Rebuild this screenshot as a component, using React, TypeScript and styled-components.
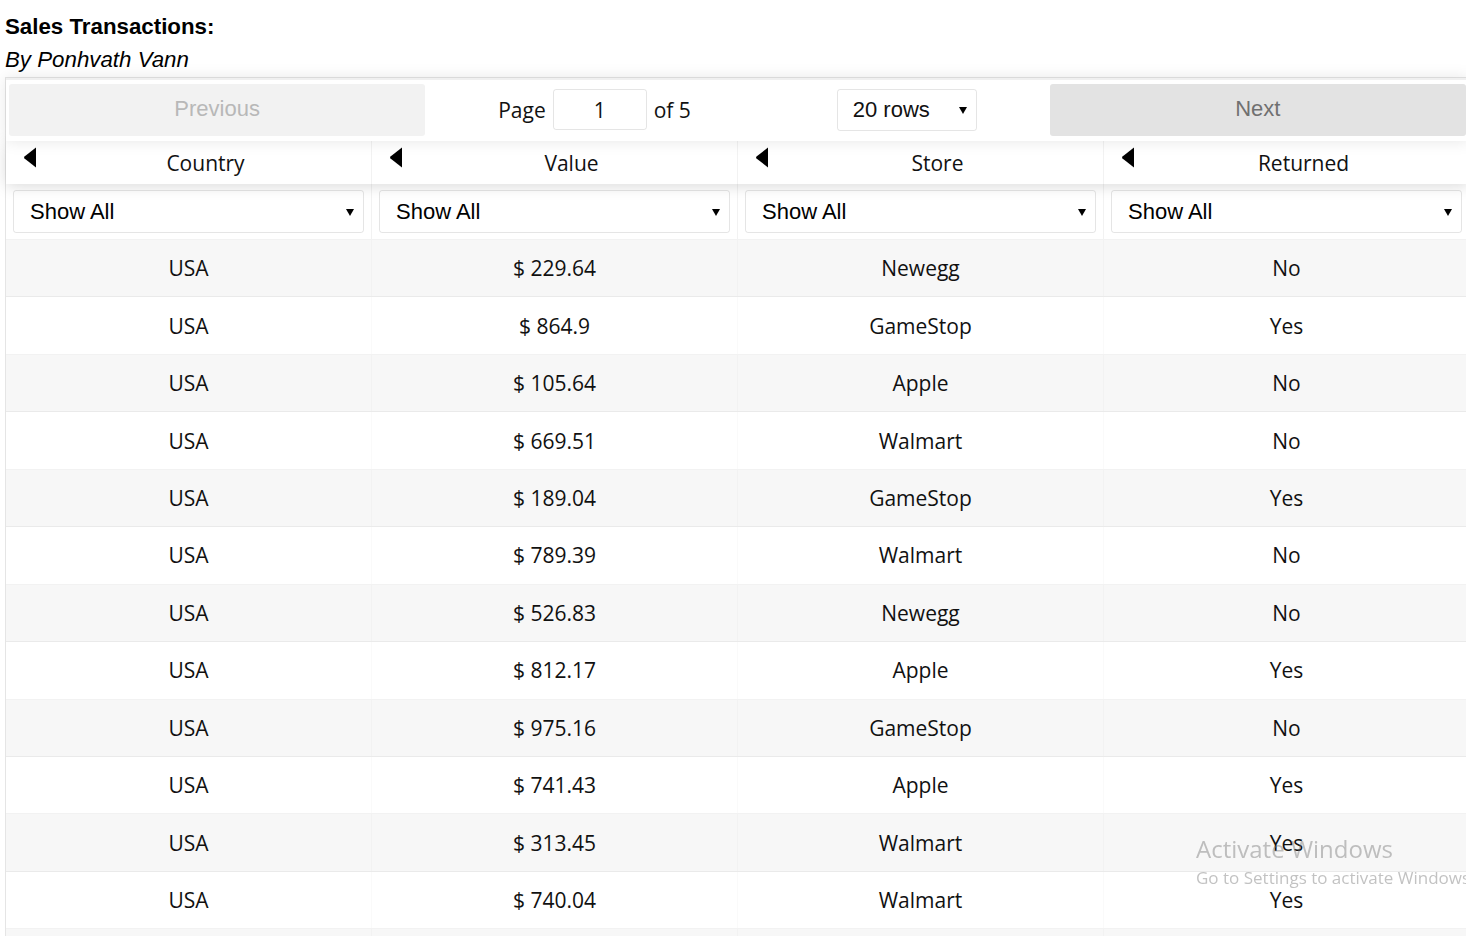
import React from 'react';
import styled, { createGlobalStyle } from 'styled-components';

const rows: [string, string, string, string][] = [
  ['USA', '$ 229.64', 'Newegg', 'No'],
  ['USA', '$ 864.9', 'GameStop', 'Yes'],
  ['USA', '$ 105.64', 'Apple', 'No'],
  ['USA', '$ 669.51', 'Walmart', 'No'],
  ['USA', '$ 189.04', 'GameStop', 'Yes'],
  ['USA', '$ 789.39', 'Walmart', 'No'],
  ['USA', '$ 526.83', 'Newegg', 'No'],
  ['USA', '$ 812.17', 'Apple', 'Yes'],
  ['USA', '$ 975.16', 'GameStop', 'No'],
  ['USA', '$ 741.43', 'Apple', 'Yes'],
  ['USA', '$ 313.45', 'Walmart', 'Yes'],
  ['USA', '$ 740.04', 'Walmart', 'Yes'],
  ['USA', '$ 402.18', 'Newegg', 'No'],
  ['USA', '$ 158.72', 'Apple', 'Yes'],
  ['USA', '$ 633.09', 'GameStop', 'No'],
  ['USA', '$ 287.5', 'Walmart', 'No'],
  ['USA', '$ 911.26', 'Newegg', 'Yes'],
  ['USA', '$ 74.8', 'Apple', 'No'],
  ['USA', '$ 550.33', 'GameStop', 'Yes'],
  ['USA', '$ 366.41', 'Walmart', 'No'],
];

const columns = ['Country', 'Value', 'Store', 'Returned'];

function LeftArrow() {
  return (
    <svg width='14' height='21' viewBox='0 0 14 21'>
      <path d='M13 0.5 L13 20.5 L1.5 11.5 Q0.6 10.5 1.5 9.5 Z' fill='#000' />
    </svg>
  );
}

function Caret() {
  return (
    <svg width='8' height='8' viewBox='0 0 8 8'>
      <path d='M0 1 L8 1 L4 8 Z' fill='#000' />
    </svg>
  );
}

function App() {
  return (
    <Page>
      <GlobalStyle />
      <Title>Sales Transactions:</Title>
      <Subtitle>By Ponhvath Vann</Subtitle>
      <Table>
        <Pagination>
          <PageButtonWrap>
            <PageButton disabled>Previous</PageButton>
          </PageButtonWrap>
          <PageCenter>
            <PageInfo>
              Page
              <PageInput>1</PageInput>
              of 5
            </PageInfo>
            <RowsSelect>
              20 rows
              <Caret />
            </RowsSelect>
          </PageCenter>
          <PageButtonWrap>
            <PageButton>Next</PageButton>
          </PageButtonWrap>
        </Pagination>
        <HeaderRow>
          {columns.map((c) => (
            <HeaderCell key={c}>
              <ArrowBox>
                <LeftArrow />
              </ArrowBox>
              <HeaderLabel>{c}</HeaderLabel>
            </HeaderCell>
          ))}
        </HeaderRow>
        <FilterRow>
          {columns.map((c) => (
            <FilterCell key={c}>
              <FilterSelect>
                Show All
                <Caret />
              </FilterSelect>
            </FilterCell>
          ))}
        </FilterRow>
        <Body>
          {rows.map((r, i) => (
            <Row key={i} striped={i % 2 === 0}>
              {r.map((v, j) => (
                <Cell key={j}>{v}</Cell>
              ))}
            </Row>
          ))}
        </Body>
      </Table>
      <Watermark>
        <WatermarkTitle>Activate Windows</WatermarkTitle>
        <WatermarkText>Go to Settings to activate Windows.</WatermarkText>
      </Watermark>
    </Page>
  );
}

export default App;

const GlobalStyle = createGlobalStyle`
  html, body {
    margin: 0;
    padding: 0;
    overflow: hidden;
    background: #fff;
  }
  body {
    font-family: "Open Sans", "Noto Sans", sans-serif;
    color: #111;
  }
`;

const Page = styled.div`
  padding: 14px 0 0 5px;
  width: 1470px;
  height: 936px;
  overflow: hidden;
  box-sizing: border-box;
`;

const Title = styled.div`
  font-family: "Liberation Sans", Arial, sans-serif;
  font-weight: bold;
  font-size: 22.3px;
  line-height: 26px;
  color: #000;
`;

const Subtitle = styled.div`
  font-family: "Liberation Sans", Arial, sans-serif;
  font-style: italic;
  font-size: 22.3px;
  line-height: 26px;
  margin-top: 7px;
  margin-bottom: 4px;
  color: #000;
`;

const Table = styled.div`
  width: 1465px;
  border: 1px solid rgba(0, 0, 0, 0.1);
  box-sizing: border-box;
  display: flex;
  flex-direction: column;
`;

const Pagination = styled.div`
  display: flex;
  align-items: flex-start;
  height: 63px;
  padding: 4px 3px 0;
  border-top: 2px solid rgba(0, 0, 0, 0.06);
  box-sizing: border-box;
  box-shadow: 0 0 15px 0 rgba(0, 0, 0, 0.1);
  position: relative;
  z-index: 2;
  background: #fff;
`;

const PageButtonWrap = styled.div`
  flex: 1;
  display: flex;
`;

const PageButton = styled.button`
  flex: 1;
  height: 52px;
  border: none;
  border-radius: 3px;
  padding: 0 0 2px;
  font-family: "Liberation Sans", Arial, sans-serif;
  font-size: 22px;
  background: ${(p) => (p.disabled ? '#f2f2f2' : '#e3e3e3')};
  color: ${(p) => (p.disabled ? '#b8b8b8' : '#707070')};
  cursor: ${(p) => (p.disabled ? 'default' : 'pointer')};
`;

const PageCenter = styled.div`
  flex: 1.5;
  height: 51px;
  display: flex;
  align-items: center;
  justify-content: space-around;
`;

const PageInfo = styled.div`
  display: flex;
  align-items: center;
  gap: 7px;
  margin: 0 10px;
  font-size: 21px;
  line-height: 28px;
`;

const PageInput = styled.div`
  width: 94px;
  height: 41px;
  box-sizing: border-box;
  border: 1px solid rgba(0, 0, 0, 0.1);
  border-radius: 3px;
  display: flex;
  align-items: center;
  justify-content: center;
  font-size: 21px;
`;

const RowsSelect = styled.div`
  width: 140px;
  height: 42px;
  margin: 0 10px;
  box-sizing: border-box;
  border: 1px solid rgba(0, 0, 0, 0.1);
  border-radius: 3px;
  display: flex;
  align-items: center;
  justify-content: space-between;
  padding: 0 9px 0 15px;
  font-family: "Liberation Sans", Arial, sans-serif;
  font-size: 22px;
`;

const HeaderRow = styled.div`
  display: flex;
  height: 43px;
  box-shadow: 0 2px 15px 0 rgba(0, 0, 0, 0.15);
  position: relative;
  z-index: 1;
  background: #fff;
`;

const HeaderCell = styled.div`
  flex: 1;
  display: flex;
  border-right: 1px solid rgba(0, 0, 0, 0.05);
  &:last-child {
    border-right: none;
  }
`;

const ArrowBox = styled.div`
  width: 34px;
  padding: 6px 3px 0 17px;
  box-sizing: border-box;
`;

const HeaderLabel = styled.div`
  flex: 1;
  text-align: center;
  font-size: 21px;
  line-height: 43px;
  padding-top: 1px;
`;

const FilterRow = styled.div`
  display: flex;
  height: 56px;
  border-bottom: 1px solid rgba(0, 0, 0, 0.05);
  box-sizing: border-box;
`;

const FilterCell = styled.div`
  flex: 1;
  display: flex;
  align-items: center;
  padding: 0 7px;
  border-right: 1px solid rgba(0, 0, 0, 0.05);
  &:last-child {
    border-right: none;
  }
`;

const FilterSelect = styled.div`
  flex: 1;
  height: 43px;
  box-sizing: border-box;
  border: 1px solid rgba(0, 0, 0, 0.1);
  border-radius: 3px;
  display: flex;
  align-items: center;
  justify-content: space-between;
  padding: 0 9px 0 16px;
  font-family: "Liberation Sans", Arial, sans-serif;
  font-size: 22px;
  color: #000;
`;

const Body = styled.div`
  display: flex;
  flex-direction: column;
`;

const Row = styled.div<{ striped: boolean }>`
  display: flex;
  height: 57.45px;
  box-sizing: border-box;
  border-bottom: 1px solid rgba(0, 0, 0, 0.05);
  background: ${(p) => (p.striped ? '#f7f7f7' : '#fff')};
`;

const Cell = styled.div`
  flex: 1;
  display: flex;
  align-items: center;
  justify-content: center;
  font-size: 21px;
  border-right: 1px solid rgba(0, 0, 0, 0.02);
  &:last-child {
    border-right: none;
  }
`;

const Watermark = styled.div`
  position: fixed;
  left: 1196px;
  top: 832px;
  white-space: nowrap;
  pointer-events: none;
  color: rgba(120, 120, 120, 0.45);
`;

const WatermarkTitle = styled.div`
  font-size: 24px;
  line-height: 34px;
`;

const WatermarkText = styled.div`
  font-size: 17px;
  line-height: 24px;
`;
